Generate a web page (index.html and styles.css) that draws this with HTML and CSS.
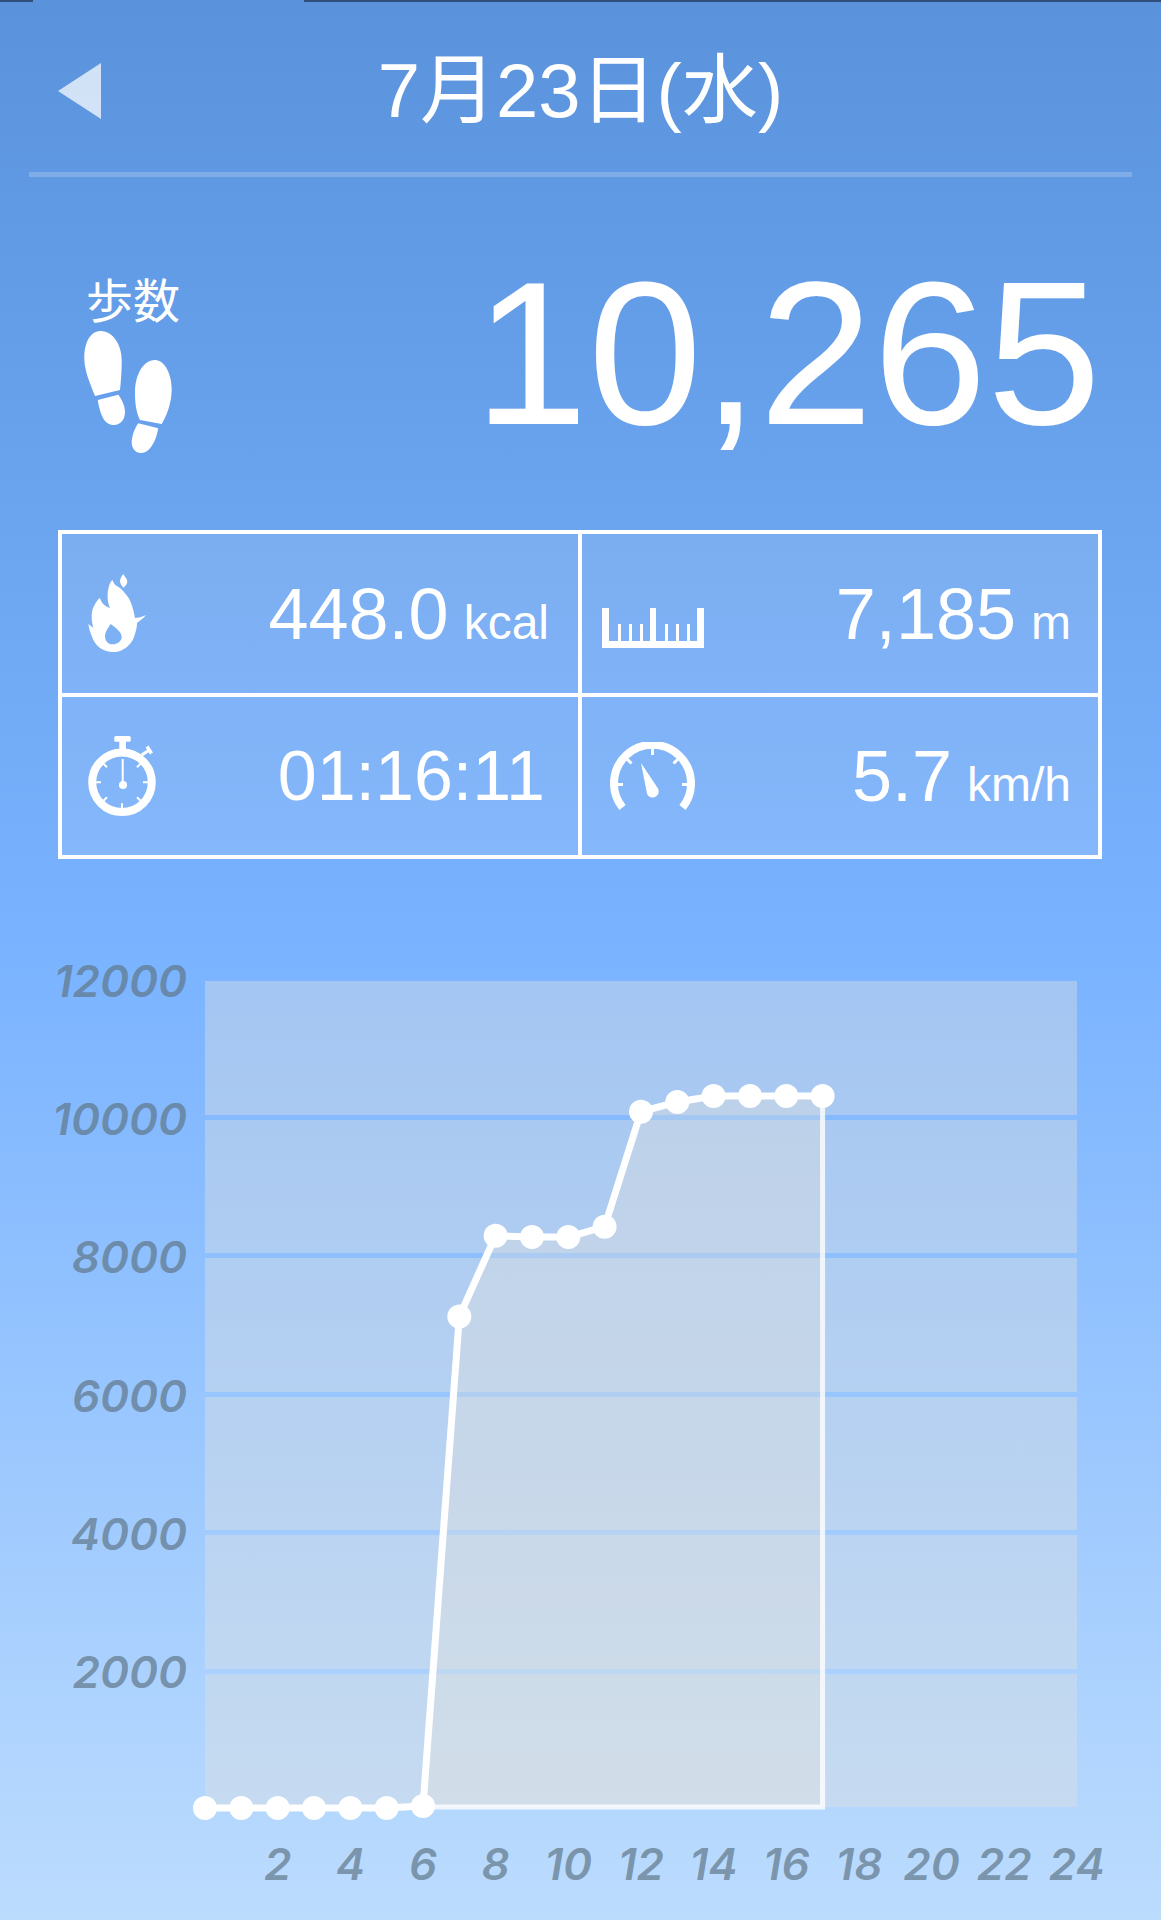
FILE: index.html
```html
<!DOCTYPE html>
<html lang="ja">
<head>
    <meta charset="UTF-8">
    <meta name="viewport" content="width=device-width, initial-scale=1.0">
    <title>歩数</title>
    <link rel="stylesheet" href="styles.css">
</head>
<body>
    <div class="top-strip">
        <span class="strip-dark strip-start"></span>
        <span class="strip-gap"></span>
        <span class="strip-dark strip-end"></span>
    </div>

    <header class="header">
        <svg class="back-icon" viewBox="0 0 43 56"><polygon points="43,0 43,56 0,28"/></svg>
        <h1 class="date-title">7月23日(水)</h1>
    </header>

    <section class="summary">
        <div class="steps-label">
            <span class="steps-text">歩数</span>
            <svg class="feet-icon" viewBox="0 0 88 122">
                <path d="M11 65C5 50 0 38 .3 26 .6 10 7 0 17 0c12 0 20.700 14 20.700 29 0 11-.7 21-1.700 30Z"/>
                <path d="M13.700 69 34.300 63.700C39 70 41 76 41 81c0 8-5 13-11 13-8 0-13-6-16.300-25Z"/>
                <path d="M56 89c-4-8-5-17-5-27 0-18 8-33 20-33 10 0 17 15 16.700 30C87.500 72 83 84 77.700 93Z"/>
                <path d="M54.300 92.300l20 5C72 110 66 122 57 122c-6 0-9.500-5-9.300-11 .3-7 3.100-14 6.600-18.700Z"/>
            </svg>
        </div>
        <div class="steps-count">10,265</div>
    </section>

    <section class="stats">
        <div class="stat-cell cell-top cell-left">
            <svg class="stat-icon flame-icon" viewBox="0 0 59 80">
                <path fill-rule="evenodd" d="M.3 50c1.700 1 3.700 3 5.200 4C3 46 3 37 6 32c2-4 4-7 6-8 1 4 4 8 10 10-3-6-3-16-1-22 1-3 2-5 3.500-6C26 11 29 12 32 14c5 5 9 9 11 15 2 5 3 10 4 15 3 0 7-1 11-3-3 4-7 6-9 8 0 4-1 8-2 11-2 8-7 13-12 15.500-3 2-6 2.500-10 2.500-5 0-10-2-13-4-4-3-7-8-8.300-12C2 58 1 54 .3 50ZM22.700 50c-2.700 4-5.700 8-5.700 12 0 5 3 8.300 7.500 8.300 5 0 9.200-3.300 9.200-7.300 0-5-5.700-9-11-13Z"/>
                <path d="M35.300 0C33 3 32 5 32 7c0 3 2 5 3.300 6.700 2.500-2 4-4 4-6 0-3-2.800-5-4-7.700Z"/>
            </svg>
            <div class="stat-value"><span class="value-num">448.0</span><span class="value-unit">kcal</span></div>
        </div>
        <div class="stat-cell cell-top cell-right">
            <svg class="stat-icon ruler-icon" viewBox="0 0 103 41">
                <path d="M0 1h7v33h9V17h3v17h8V17h3v17h8V17h3v17h7V1h6v33h9V17h3v17h8V17h3v17h8V17h3v17h7V1h7v40H0Z"/>
            </svg>
            <div class="stat-value"><span class="value-num">7,185</span><span class="value-unit">m</span></div>
        </div>
        <div class="stat-cell cell-left">
            <svg class="stat-icon watch-icon" viewBox="0 0 70 81">
                <rect x="26.300" y="0" width="16.400" height="5.700" rx="1.500"/>
                <rect x="31.300" y="5" width="6.700" height="9"/>
                <path class="watch-pin" d="M53.700 19 60.300 14.700"/>
                <path class="watch-pin wide-pin" d="M59 10.500 63.500 17.500"/>
                <circle class="watch-ring" cx="34" cy="46.300" r="29.800"/>
                <path class="watch-ticks" d="M8 46.300h5M55 46.300h5M34 67.300v5M15.500 27.800l3.500 3.500M52.500 27.800 49 31.300M15.500 64.800l3.500-3.500M52.500 64.800 49 61.300"/>
                <path class="watch-hand" d="M34.700 23v24"/>
                <circle cx="35" cy="49" r="4"/>
            </svg>
            <div class="stat-value time-value"><span class="value-num">01:16:11</span></div>
        </div>
        <div class="stat-cell cell-right">
            <svg class="stat-icon gauge-icon" viewBox="0 0 85 68">
                <path class="gauge-arc" d="M12.500 65.500A38.500 38.500 0 1 1 72.500 65.500"/>
                <path class="gauge-ticks" d="M42.500 4v9M15.500 15.500l6 6M69.500 15.500l-6 6M4 42.500h9M81 42.500h-9"/>
                <path d="M31 21 48 46.500c1.500 3 .5 7-3 8.500-3.500 1.500-7 0-8-3.500Z"/>
            </svg>
            <div class="stat-value"><span class="value-num">5.7</span><span class="value-unit">km/h</span></div>
        </div>
    </section>

    <section class="chart">
        <div class="y-axis">
            <div class="y-label">12000</div>
            <div class="y-label">10000</div>
            <div class="y-label">8000</div>
            <div class="y-label">6000</div>
            <div class="y-label">4000</div>
            <div class="y-label">2000</div>
        </div>
        <div class="plot">
            <div class="band"></div>
            <div class="band"></div>
            <div class="band"></div>
            <div class="band"></div>
            <div class="band"></div>
            <div class="band"></div>
            <svg class="plot-lines" viewBox="0 0 872 826">
                <polygon class="area-fill" points="218,825 254.300,335.500 290.600,254.700 327,256 363.300,256 399.600,245.700 436,130.700 472.300,121 508.600,115 545,115 581.300,115 617.600,115 617.600,826 218,826"/>
                <polyline class="area-edge" points="218,826 617.600,826 617.600,115"/>
                <polyline class="step-line" points="0,827 36.300,827 72.700,827 109,827 145.300,827 181.700,827 218,825 254.300,335.500 290.600,254.700 327,256 363.300,256 399.600,245.700 436,130.700 472.300,121 508.600,115 545,115 581.300,115 617.600,115"/>
                <g class="step-dots">
                    <circle cx="0" cy="827" r="12"/>
                    <circle cx="36.300" cy="827" r="12"/>
                    <circle cx="72.700" cy="827" r="12"/>
                    <circle cx="109" cy="827" r="12"/>
                    <circle cx="145.300" cy="827" r="12"/>
                    <circle cx="181.700" cy="827" r="12"/>
                    <circle cx="218" cy="825" r="12"/>
                    <circle cx="254.300" cy="335.500" r="12"/>
                    <circle cx="290.600" cy="254.700" r="12"/>
                    <circle cx="327" cy="256" r="12"/>
                    <circle cx="363.300" cy="256" r="12"/>
                    <circle cx="399.600" cy="245.700" r="12"/>
                    <circle cx="436" cy="130.700" r="12"/>
                    <circle cx="472.300" cy="121" r="12"/>
                    <circle cx="508.600" cy="115" r="12"/>
                    <circle cx="545" cy="115" r="12"/>
                    <circle cx="581.300" cy="115" r="12"/>
                    <circle cx="617.600" cy="115" r="12"/>
                </g>
            </svg>
        </div>
        <div class="x-axis">
            <span class="x-label">2</span>
            <span class="x-label">4</span>
            <span class="x-label">6</span>
            <span class="x-label">8</span>
            <span class="x-label">10</span>
            <span class="x-label">12</span>
            <span class="x-label">14</span>
            <span class="x-label">16</span>
            <span class="x-label">18</span>
            <span class="x-label">20</span>
            <span class="x-label">22</span>
            <span class="x-label">24</span>
        </div>
    </section>
</body>
</html>
```

FILE: styles.css
```css
* {
    margin: 0;
    padding: 0;
    box-sizing: border-box;
}

body {
    width: 1161px;
    height: 1920px;
    overflow: hidden;
    font-family: "Liberation Sans", "Noto Sans CJK JP", sans-serif;
    color: white;
    background: linear-gradient(to bottom, #5a93dc, #7ab3ff 50%, #bcdcfe);
}

/* top edge */
.top-strip {
    display: flex;
    height: 2px;
}

.strip-dark {
    background: #2f4f7a;
}

.strip-start {
    width: 33px;
}

.strip-gap {
    width: 271px;
}

.strip-end {
    flex: 1;
}

/* header */
.header {
    display: grid;
    grid-template-columns: 1fr auto 1fr;
    align-items: center;
    height: 175px;
    margin: 0 29px;
    padding: 0 0 0 29px;
    border-bottom: 5px solid rgba(255, 255, 255, 0.2);
}

.back-icon {
    width: 43px;
    height: 56px;
    margin-top: 8px;
    fill: rgba(255, 255, 255, 0.72);
}

.date-title {
    grid-column: 2;
    margin-left: -29px;
    margin-top: 8px;
    font-size: 76px;
    font-weight: 400;
    line-height: 1;
    white-space: nowrap;
}

/* steps */
.summary {
    display: flex;
    justify-content: space-between;
    height: 353px;
    padding: 96px 60px 0 84px;
}

.steps-label {
    display: flex;
    flex-direction: column;
    align-items: flex-start;
}

.steps-text {
    margin-left: 2px;
    font-size: 47px;
    line-height: 58px;
}

.feet-icon {
    width: 88px;
    height: 122px;
    fill: white;
}

.steps-count {
    margin-top: -23px;
    font-size: 205px;
    line-height: 205px;
}

/* stats */
.stats {
    display: grid;
    grid-template-columns: 520px 1fr;
    grid-template-rows: 163px 1fr;
    width: 1044px;
    height: 329px;
    margin-left: 58px;
    border: 4px solid white;
    background: rgba(255, 255, 255, 0.1);
}

.stat-cell {
    display: flex;
    justify-content: space-between;
    align-items: center;
    padding: 0 29px 0 26px;
}

.cell-top {
    border-bottom: 4px solid white;
}

.cell-left {
    border-right: 4px solid white;
}

.cell-right {
    padding-right: 27px;
}

.stat-icon {
    flex-shrink: 0;
    fill: white;
}

.flame-icon {
    width: 59px;
    height: 80px;
}

.ruler-icon {
    width: 103px;
    height: 41px;
    margin-top: 28px;
    margin-left: -6px;
}

.watch-icon {
    width: 70px;
    height: 81px;
}

.gauge-icon {
    width: 85px;
    height: 68px;
    margin-left: 2px;
}

.watch-ring {
    fill: none;
    stroke: white;
    stroke-width: 8;
}

.watch-ticks {
    fill: none;
    stroke: white;
    stroke-width: 2;
}

.watch-hand {
    fill: none;
    stroke: white;
    stroke-width: 2;
}

.watch-pin {
    fill: none;
    stroke: white;
    stroke-width: 3;
}

.wide-pin {
    stroke-width: 3.500;
}

.gauge-arc {
    fill: none;
    stroke: white;
    stroke-width: 8;
}

.gauge-ticks {
    fill: none;
    stroke: white;
    stroke-width: 3;
}

.stat-value {
    display: flex;
    align-items: baseline;
    gap: 15px;
}

.time-value {
    margin-right: 4px;
}

.time-value .value-num {
    font-size: 70px;
}

.value-num {
    font-size: 72px;
    line-height: 1;
}

.value-unit {
    font-size: 48px;
    line-height: 1;
}

/* chart */
.chart {
    display: grid;
    grid-template-columns: 205px 872px;
    margin-top: 99px;
}

.y-axis {
    padding-right: 18px;
    text-align: right;
}

.y-label {
    height: 138.2px;
    font-family: "Inter", "Liberation Sans", sans-serif;
    font-size: 44px;
    font-style: italic;
    font-weight: 600;
    line-height: 46px;
    color: rgba(95, 118, 135, 0.7);
}

.plot {
    position: relative;
    display: flex;
    flex-direction: column;
    gap: 5px;
    height: 826px;
    margin-top: 23px;
}

.band {
    flex: 1;
    background: rgba(226, 225, 222, 0.4);
}

.plot-lines {
    position: absolute;
    top: 0;
    left: 0;
    width: 872px;
    height: 826px;
    overflow: visible;
}

.area-fill {
    fill: rgba(235, 228, 215, 0.3);
}

.area-edge {
    fill: none;
    stroke: rgba(255, 255, 255, 0.8);
    stroke-width: 5;
}

.step-line {
    fill: none;
    stroke: white;
    stroke-width: 7;
}

.step-dots {
    fill: white;
}

.x-axis {
    grid-column: 2;
    display: flex;
    width: 908px;
    margin-top: 34px;
    padding-left: 36.33px;
}

.x-label {
    flex: 0 0 72.66px;
    font-family: "Inter", "Liberation Sans", sans-serif;
    font-size: 44px;
    font-style: italic;
    font-weight: 600;
    line-height: 46px;
    text-align: center;
    color: rgba(95, 118, 135, 0.7);
}
```
